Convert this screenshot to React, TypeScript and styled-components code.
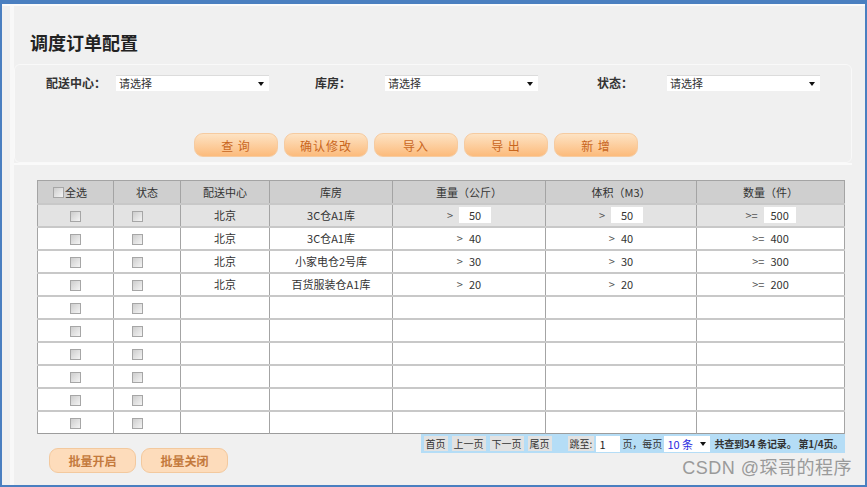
import React from 'react'
import styled, {createGlobalStyle} from 'styled-components'

const GlobalStyle = createGlobalStyle`
    html, body {
        margin:0;
        padding:0;
        background:#f0f0f0;
    }
    * {
        box-sizing:border-box;
    }
    body {
        font-family:"Noto Sans CJK SC", "Noto Sans", sans-serif;
        font-size:12px;
        color:#333;
    }
`

interface Row {
    center:string;
    house:string;
    weight:string;
    volume:string;
    amount:string;
}

const rows:Row[] = [
    {center:'北京', house:'3C仓A1库', weight:'50', volume:'50', amount:'500'},
    {center:'北京', house:'3C仓A1库', weight:'40', volume:'40', amount:'400'},
    {center:'北京', house:'小家电仓2号库', weight:'30', volume:'30', amount:'300'},
    {center:'北京', house:'百货服装仓A1库', weight:'20', volume:'20', amount:'200'},
]

const columns = [76, 67, 89, 123, 153, 151, 148]

const Frame = styled.div`
    position:relative;
    width:867px;
    height:487px;
    overflow:hidden;
    background:#f0f0f0;
    border-top:4px solid #4a7fc0;
    border-left:2px solid #4a7fc0;
    border-right:2px solid #4a7fc0;
    border-bottom:2px solid #4a7fc0;
`

const Inner = styled.div`
    height:100%;
    border-top:2px solid #fafafa;
    padding-left:8px;
`

const Column = styled.div`
    height:100%;
    width:842px;
    border-left:4px solid #f8f8f8;
    display:flex;
    flex-direction:column;
`

const TitleBar = styled.div`
    height:58px;
    padding:24px 0 0 16px;
`

const Title = styled.h1`
    margin:0;
    font-size:18px;
    font-weight:bold;
    line-height:24px;
    color:#222;
`

const FilterPanel = styled.div`
    height:99px;
    border:1px solid #f9f9f9;
    border-radius:6px;
    padding:9px 0 0 31px;
`

const FilterRow = styled.div`
    display:grid;
    grid-template-columns:269px 282px 1fr;
    height:16px;
`

const FilterGroup = styled.div`
    display:flex;
    align-items:center;
`

const Label = styled.span`
    width:70px;
    font-weight:bold;
    font-size:12px;
    color:#333;
`

const Select = styled.div<{width?:number}>`
    position:relative;
    width:${p => p.width ?? 153}px;
    height:16px;
    background:#fff;
    border-top:1px solid #dcdcdc;
    font-size:11px;
    line-height:15px;
    padding-left:3px;
    color:#333;
    &::after {
        content:'';
        position:absolute;
        right:5px;
        top:6px;
        border-left:3px solid transparent;
        border-right:3px solid transparent;
        border-top:4px solid #111;
    }
`

const ButtonRow = styled.div`
    display:flex;
    gap:6px;
    margin:43px 0 0 148px;
`

const OrangeButton = styled.button`
    width:84px;
    height:24px;
    border:1px solid #f6cba0;
    border-radius:9px;
    background:linear-gradient(#fde3c4, #fcbb7c);
    color:#c9661d;
    font-family:inherit;
    font-size:12px;
    letter-spacing:1px;
    padding:0;
`

const TablePanel = styled.div`
    flex:1;
    border-top:2px solid #fafafa;
    padding:15px 0 0 23px;
`

const Table = styled.table`
    border-collapse:collapse;
    table-layout:fixed;
    width:807px;
    border:1px solid #9c9c9c;
`

const HeadCell = styled.th<{align?:string}>`
    height:23px;
    padding:0;
    background:#cfcfcf;
    border:1px solid #a4a4a4;
    font-weight:normal;
    font-size:11px;
    color:#333;
    text-align:${p => p.align ?? 'center'};
    padding-left:${p => (p.align === 'left' ? '15px' : '0')};
`

const TR = styled.tr<{active?:boolean}>`
    background:${p => (p.active ? '#e3e3e3' : '#fff')};
`

const Cell = styled.td<{pad?:number}>`
    height:23px;
    padding:0;
    padding-left:${p => p.pad ?? 0}px;
    text-align:${p => (p.pad ? 'left' : 'center')};
    border-left:1px solid #a4a4a4;
    border-right:1px solid #a4a4a4;
    border-top:2px solid #c8c8c8;
    font-size:11px;
    color:#333;
    line-height:21px;
`

const ValueBox = styled.div`
    display:flex;
    align-items:center;
    justify-content:center;
    height:21px;
    gap:6px;
`

const Check = styled.span`
    display:inline-block;
    width:11px;
    height:11px;
    vertical-align:middle;
    border:1px solid #a6a6a6;
    background:linear-gradient(135deg, #cdcdcd, #f4f4f4);
`

const HeadCheck = styled(Check)`
    margin-right:1px;
    vertical-align:-1px;
`

const Op = styled.span`
    color:#555;
`

const NumInput = styled.span`
    width:32px;
    height:16px;
    line-height:16px;
    background:#fff;
    text-align:center;
`

const Footer = styled.div`
    display:flex;
    justify-content:space-between;
    align-items:flex-start;
    width:808px;
`

const BottomButtons = styled.div`
    display:flex;
    gap:5px;
    margin:14px 0 0 12px;
`

const SoftButton = styled.button`
    width:87px;
    height:25px;
    border:1px solid #f3c99e;
    border-radius:9px;
    background:#fddcbb;
    color:#c47a3d;
    font-family:inherit;
    font-weight:bold;
    font-size:12px;
    padding:0;
`

const Pager = styled.div`
    display:flex;
    align-items:center;
    height:19px;
    padding:0 2px 0 3px;
    background:#b5ddf6;
    font-size:10px;
    color:#333;
    white-space:nowrap;
`

const PageBtn = styled.span<{gap?:number}>`
    background:#e2e2e2;
    height:15px;
    line-height:15px;
    padding:0 2px;
    margin-right:${p => p.gap ?? 4}px;
`

const PageInput = styled.span<{width:number; blue?:boolean}>`
    position:relative;
    width:${p => p.width}px;
    height:16px;
    line-height:16px;
    background:#fff;
    padding-left:3px;
    color:${p => (p.blue ? '#2a2ae0' : '#222')};
    font-size:11px;
    margin:0 2px;
`

const Caret = styled.span`
    position:absolute;
    right:4px;
    top:6px;
    border-left:3px solid transparent;
    border-right:3px solid transparent;
    border-top:4px solid #111;
`

const Summary = styled.span`
    font-weight:bold;
    margin-left:2px;
    letter-spacing:-0.2px;
`

const Watermark = styled.div`
    position:absolute;
    right:13px;
    bottom:6px;
    font-size:18px;
    letter-spacing:0.5px;
    color:#9a9a9a;
    font-family:"Liberation Sans", "Noto Sans CJK SC", sans-serif;
`

const ValueCell = ({op, value, edit}:{op:string; value:string; edit:boolean}) => (
    <ValueBox>
        <Op>{op}</Op>
        {edit ? <NumInput>{value}</NumInput> : <span>{value}</span>}
    </ValueBox>
)

const App = () => {
    const empty = 10 - rows.length

    return (
        <Frame>
            <GlobalStyle/>
            <Inner>
                <Column>
                    <TitleBar>
                        <Title>调度订单配置</Title>
                    </TitleBar>
                    <FilterPanel>
                        <FilterRow>
                            <FilterGroup>
                                <Label>配送中心：</Label>
                                <Select>请选择</Select>
                            </FilterGroup>
                            <FilterGroup>
                                <Label>库房：</Label>
                                <Select>请选择</Select>
                            </FilterGroup>
                            <FilterGroup>
                                <Label>状态：</Label>
                                <Select>请选择</Select>
                            </FilterGroup>
                        </FilterRow>
                        <ButtonRow>
                            <OrangeButton>查 询</OrangeButton>
                            <OrangeButton>确认修改</OrangeButton>
                            <OrangeButton>导入</OrangeButton>
                            <OrangeButton>导 出</OrangeButton>
                            <OrangeButton>新 增</OrangeButton>
                        </ButtonRow>
                    </FilterPanel>
                    <TablePanel>
                        <Table>
                            <colgroup>
                                {columns.map((w, i) => <col key={i} style={{width: w}}/>)}
                            </colgroup>
                            <thead>
                                <tr>
                                    <HeadCell align="left"><HeadCheck/>全选</HeadCell>
                                    <HeadCell>状态</HeadCell>
                                    <HeadCell>配送中心</HeadCell>
                                    <HeadCell>库房</HeadCell>
                                    <HeadCell>重量（公斤）</HeadCell>
                                    <HeadCell>体积（M3）</HeadCell>
                                    <HeadCell>数量（件）</HeadCell>
                                </tr>
                            </thead>
                            <tbody>
                                {rows.map((r, i) => (
                                    <TR key={i} active={i === 0}>
                                        <Cell><Check/></Cell>
                                        <Cell pad={18}><Check/></Cell>
                                        <Cell>{r.center}</Cell>
                                        <Cell>{r.house}</Cell>
                                        <Cell><ValueCell op=">" value={r.weight} edit={i === 0}/></Cell>
                                        <Cell><ValueCell op=">" value={r.volume} edit={i === 0}/></Cell>
                                        <Cell><ValueCell op=">=" value={r.amount} edit={i === 0}/></Cell>
                                    </TR>
                                ))}
                                {Array.from({length: empty}).map((_, i) => (
                                    <TR key={'e' + i}>
                                        <Cell><Check/></Cell>
                                        <Cell pad={18}><Check/></Cell>
                                        <Cell/>
                                        <Cell/>
                                        <Cell/>
                                        <Cell/>
                                        <Cell/>
                                    </TR>
                                ))}
                            </tbody>
                        </Table>
                        <Footer>
                            <BottomButtons>
                                <SoftButton>批量开启</SoftButton>
                                <SoftButton>批量关闭</SoftButton>
                            </BottomButtons>
                            <Pager>
                                <PageBtn>首页</PageBtn>
                                <PageBtn>上一页</PageBtn>
                                <PageBtn>下一页</PageBtn>
                                <PageBtn gap={16}>尾页</PageBtn>
                                <PageBtn gap={0}>跳至:</PageBtn>
                                <PageInput width={24}>1</PageInput>
                                <span>页，每页</span>
                                <PageInput width={46} blue>10 条<Caret/></PageInput>
                                <Summary>共查到34 条记录。 第1/4页。</Summary>
                            </Pager>
                        </Footer>
                    </TablePanel>
                </Column>
            </Inner>
            <Watermark>CSDN @琛哥的程序</Watermark>
        </Frame>
    )
}

export default App
